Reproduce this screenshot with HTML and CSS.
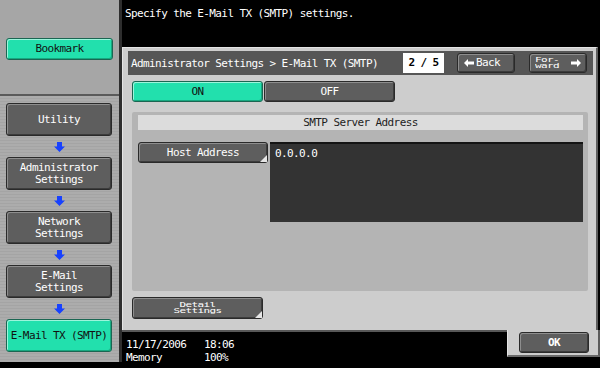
FILE: index.html
```html
<!DOCTYPE html>
<html>
<head>
  <title>E-Mail TX (SMTP)</title>
  <link rel="stylesheet" href="styles.css">
</head>
<body>
  <div class="screen">
    <aside class="sidebar">
      <div class="bookmark-area">
        <button class="btn green bookmark">Bookmark</button>
      </div>
      <nav class="crumbs">
        <div class="btn nav">Utility</div>
        <div class="down"><svg width="11" height="10" viewBox="0 0 11 10"><polygon points="3,0 8,0 8,4.5 11,4.5 5.5,10 0,4.5 3,4.5"/></svg></div>
        <div class="btn nav">Administrator<br>Settings</div>
        <div class="down"><svg width="11" height="10" viewBox="0 0 11 10"><polygon points="3,0 8,0 8,4.5 11,4.5 5.5,10 0,4.5 3,4.5"/></svg></div>
        <div class="btn nav">Network<br>Settings</div>
        <div class="down"><svg width="11" height="10" viewBox="0 0 11 10"><polygon points="3,0 8,0 8,4.5 11,4.5 5.5,10 0,4.5 3,4.5"/></svg></div>
        <div class="btn nav">E-Mail<br>Settings</div>
        <div class="down"><svg width="11" height="10" viewBox="0 0 11 10"><polygon points="3,0 8,0 8,4.5 11,4.5 5.5,10 0,4.5 3,4.5"/></svg></div>
        <div class="btn nav green">E-Mail TX (SMTP)</div>
      </nav>
    </aside>

    <main class="main">
      <div class="message">Specify the E-Mail TX (SMTP) settings.</div>

      <section class="window">
        <div class="titlebar">
          <span class="title">Administrator Settings &gt; E-Mail TX (SMTP)</span>
          <span class="page">2 / 5</span>
          <button class="btn back">
            <svg width="10" height="8" viewBox="0 0 10 8"><polygon points="0,4 4,0 4,2.5 10,2.5 10,5.5 4,5.5 4,8"/></svg>Back
          </button>
          <button class="btn fwd">
            <span class="squash">For-<br>ward</span>
            <svg width="10" height="8" viewBox="0 0 10 8"><polygon points="10,4 6,0 6,2.5 0,2.5 0,5.5 6,5.5 6,8"/></svg>
          </button>
        </div>

        <div class="toggle">
          <button class="btn green">ON</button>
          <button class="btn">OFF</button>
        </div>

        <div class="panel">
          <div class="panel-head">SMTP Server Address</div>
          <div class="field-row">
            <button class="btn corner host">Host Address</button>
            <div class="field">0.0.0.0</div>
          </div>
        </div>

        <button class="btn corner detail"><span class="squash">Detail<br>Settings</span></button>
      </section>

      <div class="footer">
        <div class="status">
          <span>11/17/2006</span><span>18:06</span>
          <span>Memory</span><span>100%</span>
        </div>
        <div class="ok-tab">
          <button class="btn ok">OK</button>
        </div>
      </div>
    </main>
  </div>
</body>
</html>
```

FILE: styles.css
```css
:root {
  --green: #22e0ad;
  --btn-gray: #5e5e5e;
  --window: #cdcdcd;
  --panel: #b4b4b4;
}

body {
  margin: 0;
  background: #000;
  color: #fff;
  font-family: "DejaVu Sans Mono", "Liberation Mono", monospace;
  font-size: 11px;
  letter-spacing: -0.6px;
  width: 600px;
  height: 368px;
  overflow: hidden;
}

.screen {
  display: flex;
  height: 362px;
}

/* left column */
.sidebar {
  width: 119px;
  flex-shrink: 0;
  border-right: 3px solid #2e2e2e;
  background: repeating-linear-gradient(#acacac 0, #acacac 2px, #a4a4a4 2px, #a4a4a4 3px);
  display: flex;
  flex-direction: column;
}

.bookmark-area {
  height: 96px;
  border-bottom: 2px solid #5a5a5a;
  background: #a6a6a6;
  padding-top: 38px;
  box-sizing: border-box;
}

.btn {
  position: relative;
  box-sizing: border-box;
  background: var(--btn-gray);
  color: #fff;
  border: 1px solid #2a2a2a;
  border-radius: 3px;
  box-shadow: inset 1px 1px 0 #8e8e8e, inset -1px -1px 0 #3c3c3c;
  font: inherit;
  letter-spacing: inherit;
  padding: 0;
  display: flex;
  align-items: center;
  justify-content: center;
  text-align: center;
  line-height: 12px;
  cursor: pointer;
}

.btn.green {
  background: var(--green);
  color: #111;
  border-color: #1b6652;
  box-shadow: inset 1px 1px 0 #9cf5dc, inset -1px -1px 0 #17a880;
}

.bookmark {
  width: 107px;
  height: 22px;
  margin-left: 6px;
}

.crumbs {
  padding: 7px 0 0 6px;
  display: flex;
  flex-direction: column;
}

.nav {
  width: 106px;
  height: 33px;
}

.down {
  height: 21px;
  width: 106px;
  display: flex;
  align-items: center;
  justify-content: center;
}

.down svg {
  fill: #1741ff;
}

/* right column */
.main {
  width: 478px;
  display: flex;
  flex-direction: column;
}

.message {
  height: 47px;
  padding: 8px 3px 0;
  box-sizing: border-box;
  line-height: 12px;
}

.window {
  width: 476px;
  height: 283px;
  box-sizing: border-box;
  background: var(--window);
  border-top: 1px solid #e4e4e4;
  border-left: 1px solid #e4e4e4;
  border-right: 2px solid #5c5c5c;
  padding: 3px 3px 0 5px;
}

.titlebar {
  height: 24px;
  width: 465px;
  background: #565656;
  display: flex;
  align-items: center;
  padding: 0 6px 0 3px;
  box-sizing: border-box;
}

.title {
  flex: 1;
}

.page {
  width: 41px;
  height: 20px;
  background: #fff;
  color: #000;
  font-weight: bold;
  text-align: center;
  line-height: 20px;
  margin-right: 13px;
}

.back, .fwd {
  width: 58px;
  height: 20px;
}

.back {
  margin-right: 14px;
  gap: 2px;
  padding-right: 8px;
}

.back svg, .fwd svg {
  fill: #fff;
}

.fwd {
  justify-content: space-between;
  padding: 0 5px;
}

.squash {
  display: inline-block;
  transform: scaleY(0.6);
  line-height: 11px;
}

.toggle {
  display: flex;
  gap: 1px;
  margin: 6px 0 0 4px;
}

.toggle .btn {
  width: 131px;
  height: 21px;
}

.panel {
  width: 456px;
  height: 179px;
  margin: 10px 0 0 4px;
  background: var(--panel);
  border-radius: 2px;
  padding: 3px 5px 0 6px;
  box-sizing: border-box;
}

.panel-head {
  height: 15px;
  line-height: 15px;
  background: #dcdcdc;
  color: #1e1e1e;
  text-align: center;
}

.field-row {
  display: flex;
  gap: 2px;
  margin-top: 12px;
}

.host {
  width: 130px;
  height: 21px;
}

.corner::after {
  content: "";
  position: absolute;
  right: 0;
  bottom: 0;
  border-style: solid;
  border-width: 0 0 7px 7px;
  border-color: transparent transparent #e6e6e6 transparent;
}

.field {
  width: 313px;
  height: 80px;
  background: #333;
  border-top: 2px solid #141414;
  box-sizing: border-box;
  padding: 4px 5px;
  line-height: 12px;
}

.detail {
  width: 131px;
  height: 22px;
  margin: 6px 0 0 4px;
}

.footer {
  height: 27px;
  display: flex;
}

.status {
  flex: 1;
  display: grid;
  grid-template-columns: 78px auto;
  grid-auto-rows: 13px;
  align-content: start;
  border-top: 2px solid #585858;
  padding: 6px 0 0 4px;
  line-height: 13px;
}

.ok-tab {
  width: 93px;
  box-sizing: border-box;
  background: var(--window);
  border-left: 1px solid #e4e4e4;
  border-right: 2px solid #5c5c5c;
  border-bottom: 2px solid #6a6a6a;
  padding: 2px 0 0 11px;
}

.ok {
  width: 70px;
  height: 21px;
  font-weight: bold;
}
```
